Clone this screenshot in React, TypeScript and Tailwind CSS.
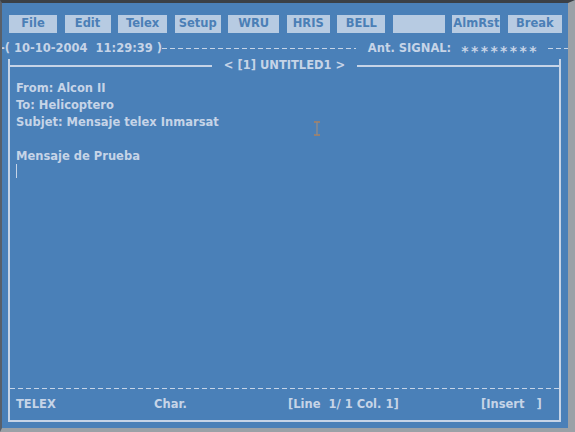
const buttons = [
  { label: "File", w: "w-[48px]" },
  { label: "Edit", w: "w-[46px]" },
  { label: "Telex", w: "w-[49px]" },
  { label: "Setup", w: "w-[46px]" },
  { label: "WRU", w: "w-[51px]" },
  { label: "HRIS", w: "w-[43px]" },
  { label: "BELL", w: "w-[48px]" },
  { label: "", w: "w-[52px]" },
  { label: "AlmRst", w: "w-[48px]" },
  { label: "Break", w: "w-[54px]" },
];

const dashes = "h-[1px] bg-[repeating-linear-gradient(90deg,#c6d4e7_0_5px,transparent_5px_8px)]";

export default function App() {
  return (
    <div className="h-[432px] w-[575px] overflow-hidden border-t-[3px] border-l-2 border-r-[7px] border-b-4 border-t-[#3b4046] border-l-[#59606a] border-r-[#9ba1a7] border-b-[#9ba1a7] bg-[#4a80b8] font-['DejaVu_Sans',Verdana,sans-serif] text-[11.5px] font-bold text-[#c6d4e7]">
      {/* menu buttons */}
      <div className="mt-[12px] ml-[7px] flex w-[553px] justify-between">
        {buttons.map((b, i) => (
          <div key={i} className={`${b.w} flex h-[18px] items-center justify-center bg-[#b7cbe2] leading-none text-[#4b7fb6]`}>
            {b.label}
          </div>
        ))}
      </div>

      {/* date / signal line */}
      <div className="mt-[8px] flex h-[15px] items-center">
        <span className="-ml-[2px] whitespace-pre">-( 10-10-2004  11:29:39 )</span>
        <div className={`flex-1 ${dashes}`} />
        <span className="ml-[12px] whitespace-pre">Ant. SIGNAL:</span>
        <span className="ml-[10px] mt-[4px] text-[14px] italic leading-none tracking-[2.4px]">********</span>
        <div className={`ml-[9px] w-[20px] ${dashes}`} />
      </div>

      {/* editor panel */}
      <div className="mt-[3px] ml-[6px] flex h-[363px] w-[553px] flex-col border-x-2 border-b-2 border-[#c6d4e7]">
        <div className="-mx-[2px] flex h-[14px] items-center">
          <div className="h-[2px] flex-1 bg-[#c6d4e7]" />
          <span className="px-[12px] leading-none">&lt; [1] UNTITLED1 &gt;</span>
          <div className="h-[2px] flex-1 bg-[#c6d4e7]" />
        </div>
        <div className="relative flex-1 pl-[6px] pt-[7px] leading-[17px]">
          <div>From: Alcon II</div>
          <div>To: Helicoptero</div>
          <div>Subjet: Mensaje telex Inmarsat</div>
          <div>&nbsp;</div>
          <div>Mensaje de Prueba</div>
          <div className="-mt-[1px] h-[14px] w-[1px] bg-[#c6d4e7]" />
          <svg className="absolute left-[303px] top-[48px]" width="8" height="15" viewBox="0 0 8 15">
            <path d="M1 1h6M1 14h6" stroke="#b0805a" strokeWidth="1.4" />
            <path d="M4 1v13" stroke="#8f8a8a" strokeWidth="1.4" />
          </svg>
        </div>
        <div className={`mb-[9px] ${dashes}`} />
        <div className="mb-[8px] flex h-[14px] items-center pl-[6px] leading-none whitespace-pre">
          <span className="w-[138px]">TELEX</span>
          <span className="w-[134px]">Char.</span>
          <span className="w-[193px]">[Line  1/ 1 Col. 1]</span>
          <span>[Insert   ]</span>
        </div>
      </div>
    </div>
  );
}
